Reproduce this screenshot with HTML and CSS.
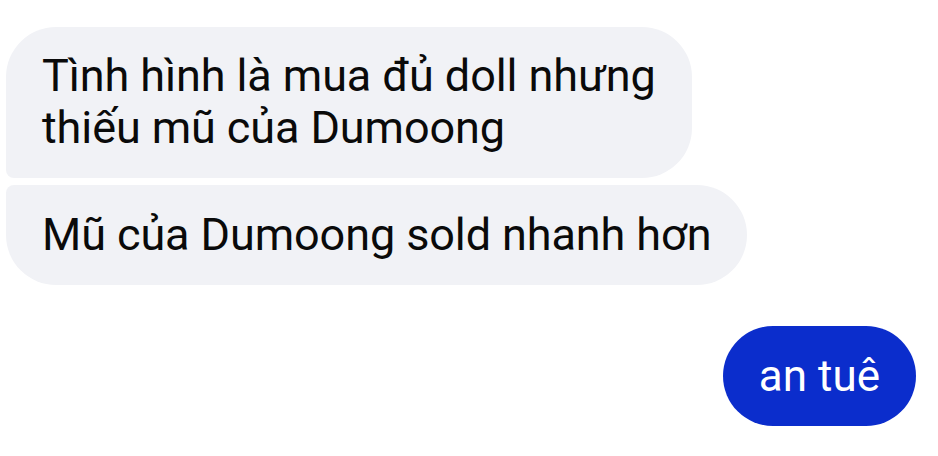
FILE: index.html
```html
<!DOCTYPE html>
<html lang="vi">
<head>
  <meta charset="UTF-8">
  <title>Tin nhắn</title>
  <link rel="stylesheet" href="styles.css">
</head>
<body>
  <div class="thread">
    <div class="group incoming">
      <div class="bubble first">Tình hình là mua đủ doll nhưng<br>thiếu mũ của Dumoong</div>
      <div class="bubble last">Mũ của Dumoong sold nhanh hơn</div>
    </div>

    <div class="group outgoing">
      <div class="bubble single">an tuê</div>
    </div>
  </div>
</body>
</html>
```

FILE: styles.css
```css
body {
  margin: 0;
  background: #ffffff;
  font-family: Roboto, "Noto Sans", sans-serif;
}

.thread {
  display: flex;
  flex-direction: column;
  padding: 27px 22px 0 6px;
  gap: 41px;
}

.group {
  display: flex;
  flex-direction: column;
  gap: 7px;
}

.incoming {
  align-items: flex-start;
}

.outgoing {
  align-items: flex-end;
}

.bubble {
  font-size: 45px;
  line-height: 52px;
  padding: 23px 36px;
  border-radius: 50px;
}

.incoming .bubble {
  background: #f1f2f6;
  color: #0a0a0a;
  letter-spacing: -0.1px;
}

.incoming .first {
  padding-bottom: 24px;
  border-bottom-left-radius: 8px;
}

.incoming .last {
  padding: 24px 36px;
  border-top-left-radius: 8px;
}

.outgoing .bubble {
  background: #0b2dcc;
  color: #ffffff;
  font-size: 44px;
  padding: 24px 36px;
}
```
